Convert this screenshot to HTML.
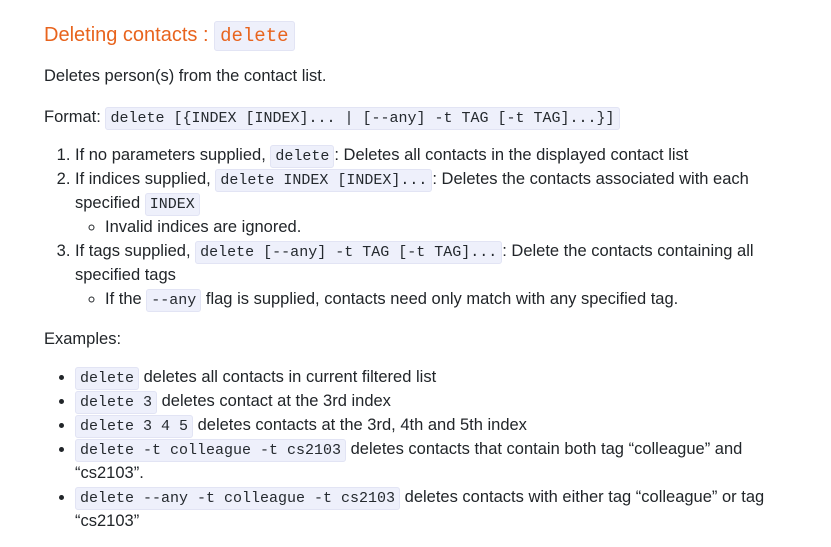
<!DOCTYPE html>
<html><head><meta charset="utf-8"><style>
body{margin:0;background:#fff;color:#212529;font-family:"Liberation Sans",sans-serif;font-size:16.5px;line-height:24px;width:831px;height:547px;overflow:hidden}
.w{position:absolute;left:44px;top:2px;width:745px}
h2{color:#e8641e;font-weight:400;font-size:20px;margin:20px 0 0;line-height:26px}
h2 code{color:#e8641e;font-size:19px;padding:3px 5px}
p{margin:0}
code{font-family:"Liberation Mono",monospace;font-size:15px;background:#eef0fb;border:1px solid #e2e4f4;border-radius:3px;padding:2px 4px;color:#24292e;line-height:1}
ol,ul{margin:0;padding-left:31px}
ol ul{padding-left:30px;list-style:circle}
li{margin:0}
ul.e{padding-left:31px}
</style></head><body><div class="w">
<h2>Deleting contacts : <code>delete</code></h2>
<p style="margin-top:16px">Deletes person(s) from the contact list.</p>
<p style="margin-top:17px">Format: <code>delete [{INDEX [INDEX]... | [--any] -t TAG [-t TAG]...}]</code></p>
<ol style="margin-top:14px">
<li>If no parameters supplied, <code>delete</code>: Deletes all contacts in the displayed contact list</li>
<li>If indices supplied, <code>delete INDEX [INDEX]...</code>: Deletes the contacts associated with each specified <code>INDEX</code>
<ul><li>Invalid indices are ignored.</li></ul></li>
<li>If tags supplied, <code>delete [--any] -t TAG [-t TAG]...</code>: Delete the contacts containing all specified tags
<ul><li>If the <code>--any</code> flag is supplied, contacts need only match with any specified tag.</li></ul></li>
</ol>
<p style="margin-top:16px">Examples:</p>
<ul class="e" style="margin-top:14px">
<li><code>delete</code> deletes all contacts in current filtered list</li>
<li><code>delete 3</code> deletes contact at the 3rd index</li>
<li><code>delete 3 4 5</code> deletes contacts at the 3rd, 4th and 5th index</li>
<li><code>delete -t colleague -t cs2103</code> deletes contacts that contain both tag “colleague” and “cs2103”.</li>
<li><code>delete --any -t colleague -t cs2103</code> deletes contacts with either tag “colleague” or tag “cs2103”</li>
</ul>
</div></body></html>
